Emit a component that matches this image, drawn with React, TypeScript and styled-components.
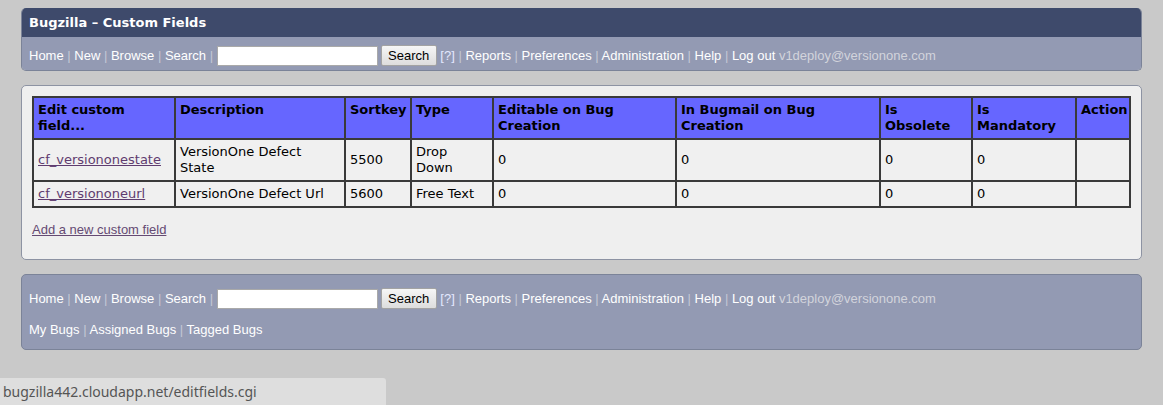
import React from "react";
import styled, { createGlobalStyle } from "styled-components";

const GlobalStyle = createGlobalStyle`
  html, body {
    margin: 0;
    padding: 0;
    background: #c9c9c9;
  }
  body {
    font-family: "Liberation Sans", Arial, sans-serif;
    font-size: 13px;
  }
`;

const Page = styled.div`
  display: flex;
  flex-direction: column;
  gap: 14px;
  padding: 8px 21px 0 21px;
  min-height: 405px;
  box-sizing: border-box;
`;

const Header = styled.header`
  display: flex;
  flex-direction: column;
  border-radius: 5px;
  overflow: hidden;
  border: 1px solid #7b8398;
  border-top: none;
`;

const TitleBar = styled.div`
  height: 29px;
  background: #3e4a6b;
  color: #ffffff;
  font-family: "DejaVu Sans", Verdana, sans-serif;
  font-weight: bold;
  font-size: 13px;
  display: flex;
  align-items: center;
  padding: 0 7px;
`;

const NavBar = styled.div<{ $footer?: boolean }>`
  background: #939ab3;
  display: flex;
  flex-direction: column;
  gap: 9px;
  padding: ${(p) => (p.$footer ? "13px 7px 8px" : "8px 7px 3px")};
  ${(p) =>
    p.$footer
      ? `border: 1px solid #7b8398; border-radius: 5px;`
      : ``}
`;

const NavRow = styled.div`
  height: 22px;
  line-height: 22px;
  white-space: nowrap;
  font-family: "Liberation Sans", Arial, sans-serif;
  font-size: 13px;
  color: #ffffff;
`;

const NavLink = styled.span`
  color: #ffffff;
`;

const Sep = styled.span`
  color: #c3c8d6;
`;

const HelpLink = styled.span`
  color: #e3e8ff;
`;

const Email = styled.span`
  color: #d2d4dc;
`;

const SearchInput = styled.input`
  width: 161px;
  height: 20px;
  box-sizing: border-box;
  border: 1px solid #a9a9a9;
  background: #ffffff;
  margin: 0;
  padding: 1px 2px;
  font-family: "Liberation Sans", Arial, sans-serif;
  font-size: 13px;
`;

const SearchButton = styled.button`
  height: 21px;
  width: 56px;
  box-sizing: border-box;
  margin: 0 0 0 3px;
  padding: 0;
  border: 1px solid #a3a3a3;
  border-radius: 2px;
  background: linear-gradient(#f6f6f6, #dddddd);
  font-family: "Liberation Sans", Arial, sans-serif;
  font-size: 13px;
  color: #000000;
`;

const MainBox = styled.main`
  background: #efefef;
  border: 1px solid #8d93a3;
  border-radius: 5px;
  padding: 10px;
`;

const FieldTable = styled.table`
  width: 100%;
  table-layout: fixed;
  border-collapse: separate;
  border-spacing: 0;
  border: 1px solid #3a3a3a;
  font-family: "DejaVu Sans", Verdana, sans-serif;
  font-size: 13px;
  color: #000000;
`;

const HeadCell = styled.th`
  background: #6666ff;
  border: 1px solid #3a3a3a;
  text-align: left;
  vertical-align: top;
  padding: 4px 4px;
  font-weight: bold;
  line-height: 16px;
  white-space: nowrap;
`;

const BodyCell = styled.td`
  background: #f0f0f0;
  border: 1px solid #3a3a3a;
  vertical-align: middle;
  padding: 4px 4px;
  line-height: 16px;
  white-space: nowrap;
`;

const FieldLink = styled.a`
  color: #5f3c6f;
  text-decoration: underline;
`;

const AddLink = styled.a`
  display: block;
  margin: 14px 0 11px 0;
  line-height: 16px;
  font-family: "Liberation Sans", Arial, sans-serif;
  font-size: 13px;
  color: #654a73;
  text-decoration: underline;
`;

const StatusBar = styled.div`
  position: fixed;
  left: 0;
  bottom: 0;
  width: 386px;
  height: 27px;
  box-sizing: border-box;
  background: #dedede;
  border-top-right-radius: 3px;
  color: #555555;
  font-family: "Noto Sans", "Open Sans", sans-serif;
  font-size: 14px;
  display: flex;
  align-items: center;
  padding-left: 3px;
`;

const colWidths = [142, 170, 66, 82, 183, 204, 92, 104, 53];

const headers: string[][] = [
  ["Edit custom", "field..."],
  ["Description"],
  ["Sortkey"],
  ["Type"],
  ["Editable on Bug", "Creation"],
  ["In Bugmail on Bug", "Creation"],
  ["Is", "Obsolete"],
  ["Is", "Mandatory"],
  ["Action"],
];

const rows = [
  {
    name: "cf_versiononestate",
    desc: ["VersionOne Defect", "State"],
    sortkey: "5500",
    type: ["Drop", "Down"],
  },
  {
    name: "cf_versiononeurl",
    desc: ["VersionOne Defect Url"],
    sortkey: "5600",
    type: ["Free Text"],
  },
];

const mainLinks = ["Home", "New", "Browse", "Search"];
const afterLinks = ["Reports", "Preferences", "Administration", "Help", "Log out"];

function Nav() {
  return (
    <NavRow>
      {mainLinks.map((l) => (
        <React.Fragment key={l}>
          <NavLink>{l}</NavLink>
          <Sep>{" | "}</Sep>
        </React.Fragment>
      ))}
      <SearchInput type="text" />
      <SearchButton type="button">Search</SearchButton>
      {" "}
      <HelpLink>[?]</HelpLink>
      {afterLinks.map((l) => (
        <React.Fragment key={l}>
          <Sep>{" | "}</Sep>
          <NavLink>{l}</NavLink>
        </React.Fragment>
      ))}
      {" "}
      <Email>v1deploy@versionone.com</Email>
    </NavRow>
  );
}

const lines = (parts: string[]) =>
  parts.map((p, i) => (
    <React.Fragment key={i}>
      {i > 0 && <br />}
      {p}
    </React.Fragment>
  ));

export default function App() {
  return (
    <>
      <GlobalStyle />
      <Page>
        <Header>
          <TitleBar>Bugzilla – Custom Fields</TitleBar>
          <NavBar>
            <Nav />
          </NavBar>
        </Header>

        <MainBox>
          <FieldTable>
            <colgroup>
              {colWidths.map((w, i) => (
                <col key={i} style={{ width: i === colWidths.length - 1 ? "auto" : w }} />
              ))}
            </colgroup>
            <thead>
              <tr>
                {headers.map((h, i) => (
                  <HeadCell key={i}>{lines(h)}</HeadCell>
                ))}
              </tr>
            </thead>
            <tbody>
              {rows.map((r) => (
                <tr key={r.name}>
                  <BodyCell>
                    <FieldLink href="#">{r.name}</FieldLink>
                  </BodyCell>
                  <BodyCell>{lines(r.desc)}</BodyCell>
                  <BodyCell>{r.sortkey}</BodyCell>
                  <BodyCell>{lines(r.type)}</BodyCell>
                  <BodyCell>0</BodyCell>
                  <BodyCell>0</BodyCell>
                  <BodyCell>0</BodyCell>
                  <BodyCell>0</BodyCell>
                  <BodyCell></BodyCell>
                </tr>
              ))}
            </tbody>
          </FieldTable>
          <AddLink href="#">Add a new custom field</AddLink>
        </MainBox>

        <NavBar $footer>
          <Nav />
          <NavRow>
            <NavLink>My Bugs</NavLink>
            <Sep>{" | "}</Sep>
            <NavLink>Assigned Bugs</NavLink>
            <Sep>{" | "}</Sep>
            <NavLink>Tagged Bugs</NavLink>
          </NavRow>
        </NavBar>
      </Page>
      <StatusBar>bugzilla442.cloudapp.net/editfields.cgi</StatusBar>
    </>
  );
}
